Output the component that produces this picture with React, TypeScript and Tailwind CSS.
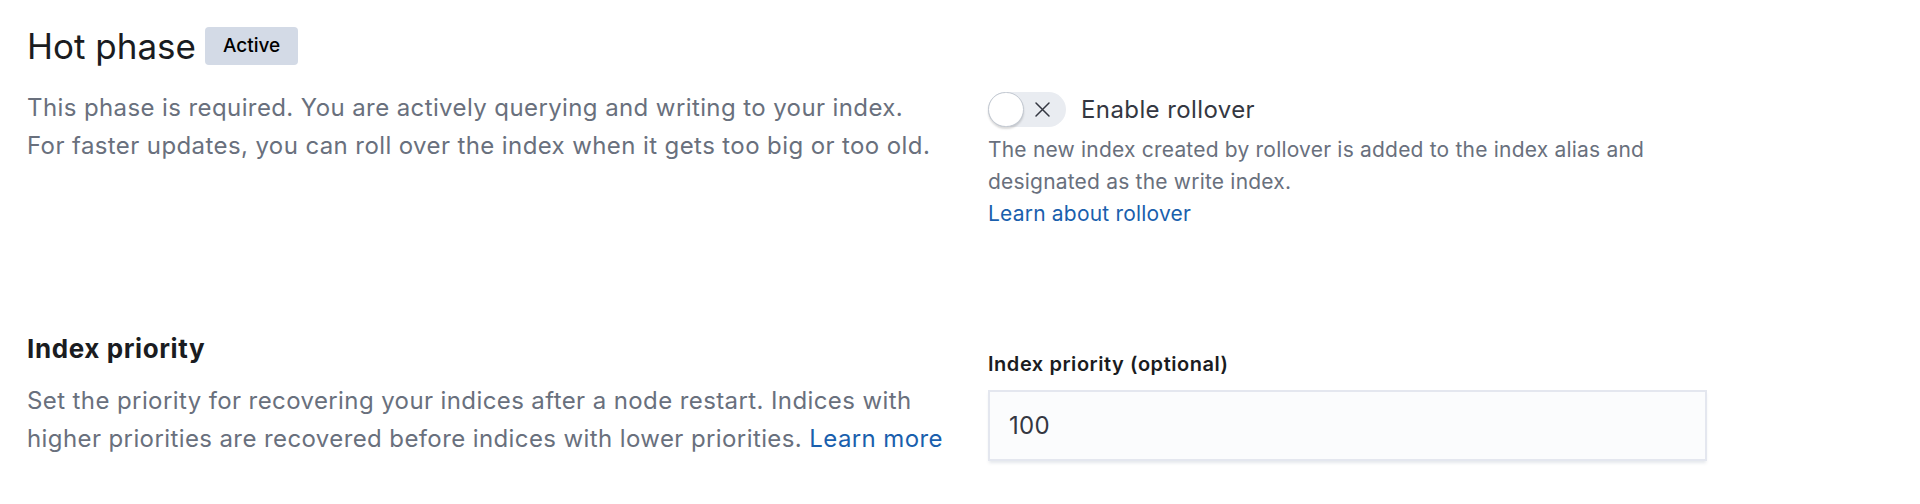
import React from 'react';

function RolloverSwitch() {
    return (
        <div className="flex items-center gap-[15px]">
            <button type="button" className="relative w-[78px] h-[35px] rounded-full bg-[#e9ecf1] shrink-0">
                <span className="absolute left-0 top-0 w-[36px] h-[35px] rounded-full bg-white border border-[#c2c8d1] shadow-[0_2px_2px_rgba(0,0,0,0.15)]"></span>
                <svg className="absolute right-[15px] top-[9px]" width="17" height="17" viewBox="0 0 17 17" fill="none">
                    <path d="M2 2L15 15M15 2L2 15" stroke="#343741" strokeWidth="1.5" strokeLinecap="round" />
                </svg>
            </button>
            <span className="text-[24px] leading-[35px] tracking-[0.4px] text-[#343741]">Enable rollover</span>
        </div>
    );
}

export default function App() {
    return (
        <div className="w-[1920px] h-[504px] bg-white pl-[27px] pt-[25px] font-['Inter','Liberation_Sans',sans-serif] antialiased">
            {/* Phase title */}
            <div className="flex items-center gap-[9px]">
                <h2 className="text-[35px] leading-[42px] text-[#1a1c21]">Hot phase</h2>
                <span className="h-[38px] px-[18px] flex items-center rounded-[4px] bg-[#d3dae6] text-[19px] font-medium text-black">Active</span>
            </div>

            {/* Rollover row */}
            <div className="flex mt-[18px]">
                <p className="w-[918px] pt-[4px] text-[24px] leading-[38px] tracking-[0.4px] text-[#69707d]">
                    This phase is required. You are actively querying and writing to your index. For faster updates, you can roll over the index when it gets too big or too old.
                </p>
                <div className="ml-[43px] w-[719px] pt-[7px]">
                    <RolloverSwitch />
                    <div className="mt-[7px] text-[21px] leading-[32px] tracking-[0.2px] text-[#69707d]">
                        <p>The new index created by rollover is added to the index alias and designated as the write index.</p>
                        <a className="text-[#1a5fad]">Learn about rollover</a>
                    </div>
                </div>
            </div>

            {/* Index priority row */}
            <div className="flex mt-[103px]">
                <div className="w-[918px]">
                    <h3 className="text-[26px] leading-[32px] font-bold tracking-[0.6px] text-[#1a1c21]">Index priority</h3>
                    <p className="mt-[17px] text-[24px] leading-[38px] tracking-[0.4px] text-[#69707d]">
                        Set the priority for recovering your indices after a node restart. Indices with higher priorities are recovered before indices with lower priorities. <a className="text-[#1a5fad]">Learn more</a>
                    </p>
                </div>
                <div className="ml-[43px] w-[719px] pt-[17px]">
                    <label className="block text-[20px] leading-[28px] font-semibold tracking-[0.55px] text-[#1a1c21]">Index priority (optional)</label>
                    <div className="mt-[12px] h-[71px] flex items-center px-[19px] bg-[#fbfcfd] border-2 border-[#e4e7ef] shadow-[0_3px_3px_-1px_rgba(152,162,179,0.25)]">
                        <span className="text-[24px] tracking-[0.3px] text-[#343741]">100</span>
                    </div>
                </div>
            </div>
        </div>
    );
}
